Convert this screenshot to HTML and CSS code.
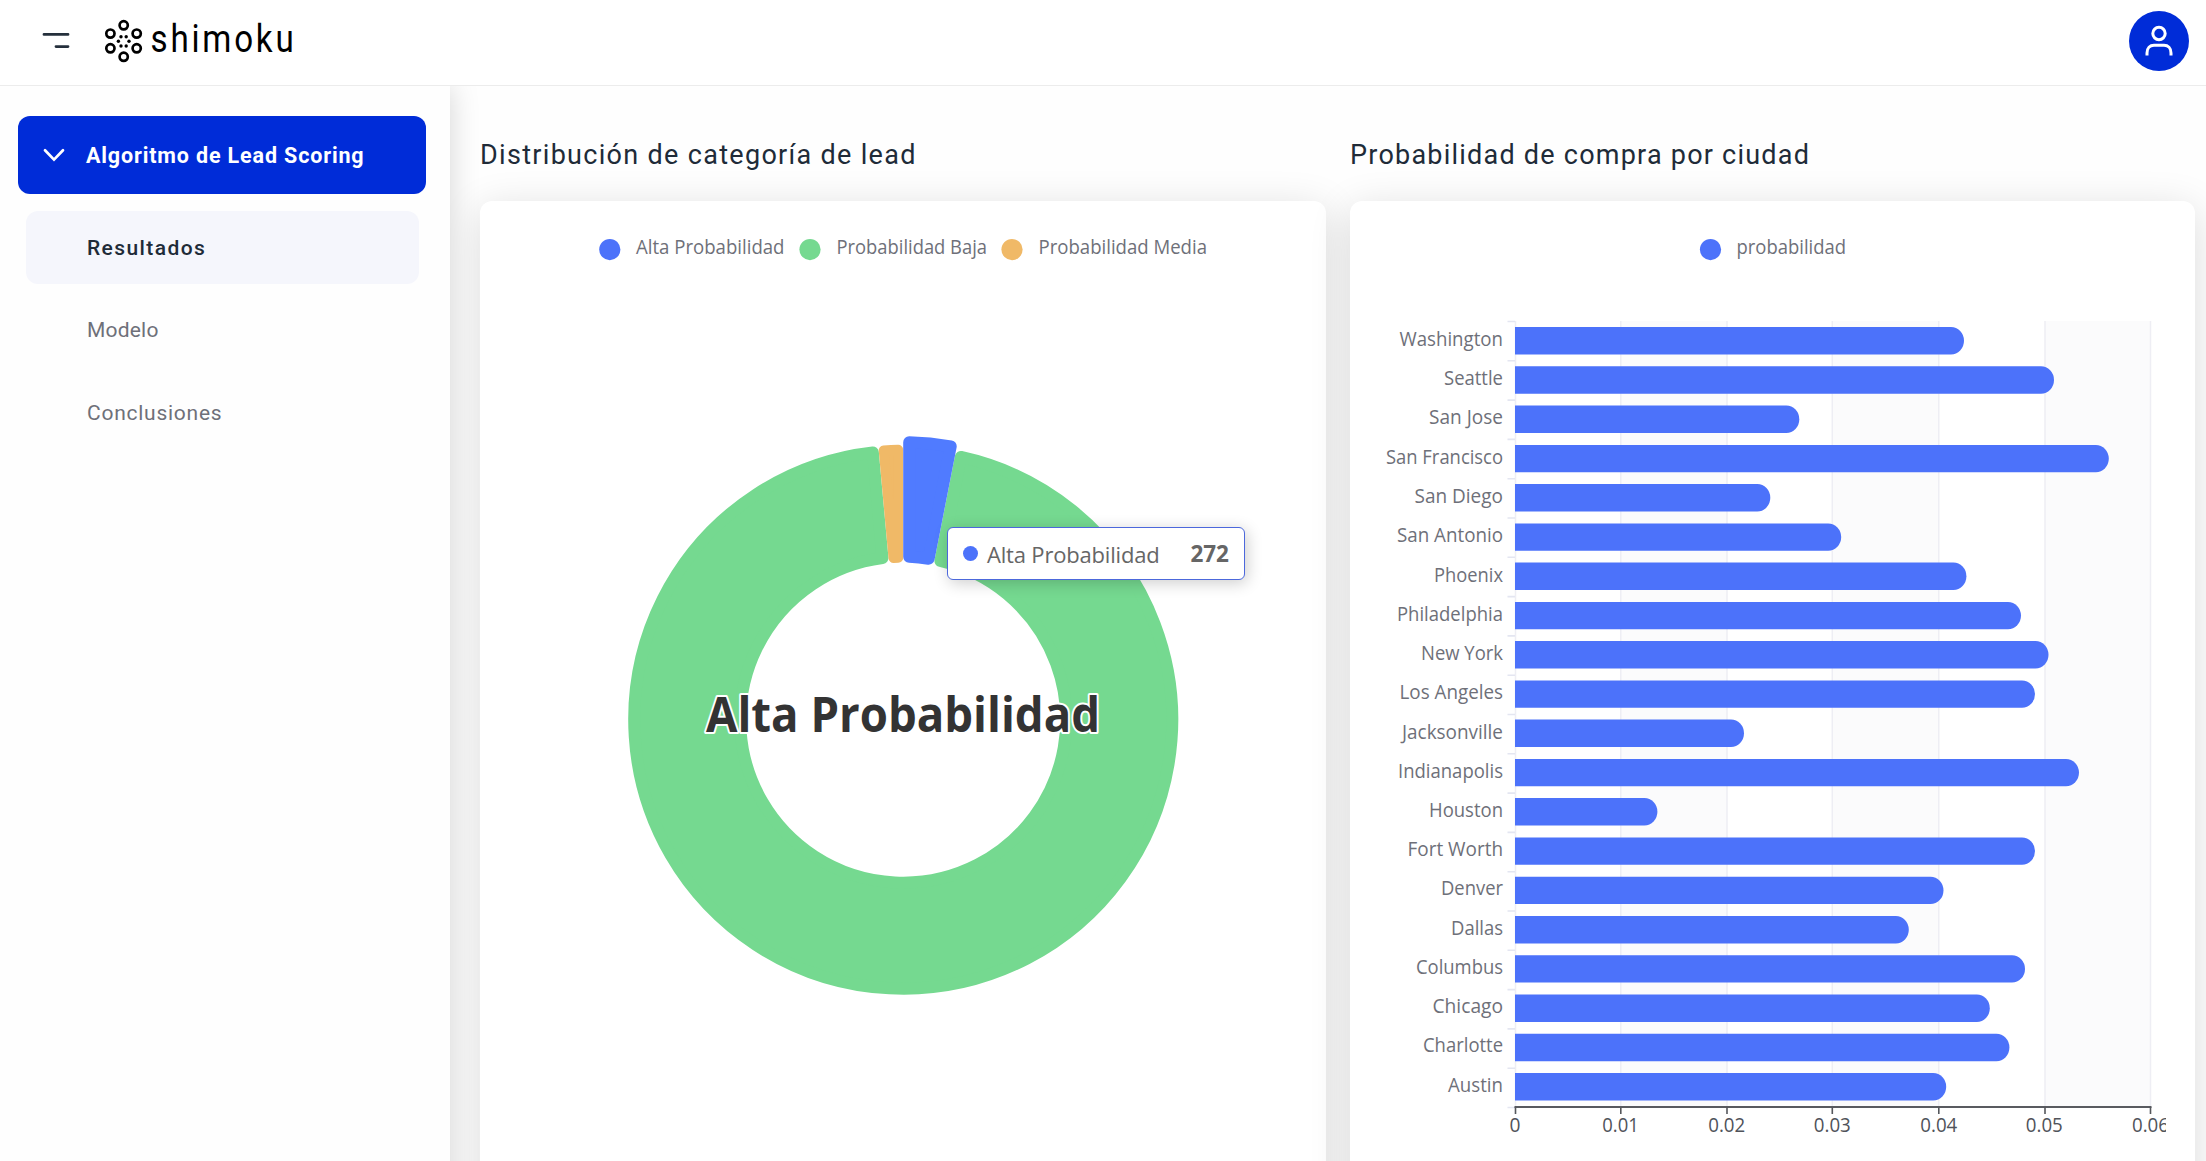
FILE: index.html
```html
<!DOCTYPE html>
<html lang="es">
<head>
<meta charset="utf-8">
<title>Shimoku - Algoritmo de Lead Scoring</title>
<link rel="stylesheet" href="styles.css">
</head>
<body>
<header class="topbar">
  <svg class="menu-icon" width="28" height="18" viewBox="0 0 28 18"><path d="M2 3.4H26M14 15.6H26"/></svg>
  <svg class="logo" width="200" height="60" viewBox="104 11 200 60">
    <g class="logo-rings">
      <circle cx="123.7" cy="25.3" r="4.1"/><circle cx="110.4" cy="33.6" r="4.1"/><circle cx="136.7" cy="33.6" r="4.1"/>
      <circle cx="110.4" cy="48.3" r="4.1"/><circle cx="136.7" cy="48.3" r="4.1"/><circle cx="123.7" cy="56.8" r="4.1"/>
    </g>
    <g class="logo-dots">
      <circle cx="121" cy="36.7" r="1.7"/><circle cx="126.2" cy="36.7" r="1.7"/><circle cx="118.4" cy="41.3" r="1.7"/>
      <circle cx="129" cy="41.3" r="1.7"/><circle cx="121" cy="46" r="1.7"/><circle cx="126.2" cy="46" r="1.7"/>
    </g>
    <text class="logo-text" transform="translate(150.5 52) scale(.84 1)" textLength="170.5">shimoku</text>
  </svg>
  <div class="avatar">
    <svg width="30" height="34" viewBox="0 0 30 34"><circle cx="15" cy="9.5" r="6.2"/><path d="M3 31.5V29C3 24 6 21.2 10 21.2H20C24 21.2 27 24 27 29V31.5"/></svg>
  </div>
</header>
<div class="body">
  <nav class="sidebar">
    <div class="group">
      <svg width="24" height="16" viewBox="0 0 24 16"><path d="M3 3.2L12 12.6L21 3.2"/></svg>
      <span>Algoritmo de Lead Scoring</span>
    </div>
    <a class="item active">Resultados</a>
    <a class="item item-short">Modelo</a>
    <a class="item">Conclusiones</a>
  </nav>
  <main class="content">
    <section class="panel">
      <h2 class="title-one">Distribución de categoría de lead</h2>
      <div class="card">
        <svg class="chart" width="846" height="960" viewBox="480 201 846 960">
          <g class="legend">
            <circle class="c-blue" cx="609.8" cy="249.6" r="10.6"/><text x="636" y="254.3" textLength="148.5" lengthAdjust="spacingAndGlyphs">Alta Probabilidad</text>
            <circle class="c-green" cx="810" cy="249.6" r="10.6"/><text x="836.5" y="254.3" textLength="150.5" lengthAdjust="spacingAndGlyphs">Probabilidad Baja</text>
            <circle class="c-orange" cx="1012" cy="249.6" r="10.6"/><text x="1038.5" y="254.3" textLength="168.5" lengthAdjust="spacingAndGlyphs">Probabilidad Media</text>
          </g>
          <g transform="translate(903.2 719.7)" class="donut">
            <path class="s-green" d="M57.66 -262.75A269 269 0 1 1 -30.34 -267.28L-20.73 -161.68A163 163 0 1 0 37.24 -158.69Z"/>
            <path class="s-orange" d="M-19.48 -269.29A270 270 0 0 1 -5 -269.95L-5 -161.92A162 162 0 0 0 -9.69 -161.71Z"/>
            <path class="s-blue" d="M6 -277.44A277.5 277.5 0 0 1 47.52 -273.41L25.47 -161A163 163 0 0 0 6 -162.89Z"/>
          </g>
          <text class="center-label" x="706" y="731.5" textLength="394" lengthAdjust="spacingAndGlyphs">Alta Probabilidad</text>
        </svg>
        <div class="tooltip"><i></i><span>Alta Probabilidad</span><b>272</b></div>
      </div>
    </section>
    <section class="panel">
      <h2 class="title-two">Probabilidad de compra por ciudad</h2>
      <div class="card">
        <svg class="chart" width="816" height="960" viewBox="1350 201 816 960">
          <g class="legend">
            <circle class="c-blue" cx="1710.5" cy="249.6" r="10.6"/><text x="1736.5" y="254.3" textLength="109.5" lengthAdjust="spacingAndGlyphs">probabilidad</text>
          </g>
          <g class="bands"><path d="M1621 321h106v786h-106zM1832.5 321h106v786h-106zM2044.5 321h106v786h-106z"/></g>
          <path class="grid" d="M1515.5 321V1107M1620.8 321V1107M1727 321V1107M1832.3 321V1107M1938.8 321V1107M2045 321V1107M2150.5 321V1107"/>
          <path class="yticks" d="M1507.5 321.5h7.5m-7.5 39.3h7.5m-7.5 39.3h7.5m-7.5 39.3h7.5m-7.5 39.3h7.5m-7.5 39.3h7.5m-7.5 39.3h7.5m-7.5 39.3h7.5m-7.5 39.3h7.5m-7.5 39.3h7.5m-7.5 39.3h7.5m-7.5 39.3h7.5m-7.5 39.3h7.5m-7.5 39.3h7.5m-7.5 39.3h7.5m-7.5 39.3h7.5m-7.5 39.3h7.5m-7.5 39.3h7.5m-7.5 39.3h7.5m-7.5 39.3h7.5m-7.5 39.3h7.5"/>
          <g class="bars">
            <path d="M1515 327H1951a13 13.7 0 0 1 0 27.4H1515z"/>
            <path d="M1515 366.3H2041a13 13.7 0 0 1 0 27.4H1515z"/>
            <path d="M1515 405.6H1786.3a13 13.7 0 0 1 0 27.4H1515z"/>
            <path d="M1515 444.9H2095.8a13 13.7 0 0 1 0 27.4H1515z"/>
            <path d="M1515 484.1H1757.3a13 13.7 0 0 1 0 27.4H1515z"/>
            <path d="M1515 523.4H1828.2a13 13.7 0 0 1 0 27.4H1515z"/>
            <path d="M1515 562.6H1953.4a13 13.7 0 0 1 0 27.4H1515z"/>
            <path d="M1515 601.9H2008a13 13.7 0 0 1 0 27.4H1515z"/>
            <path d="M1515 641.1H2035.5a13 13.7 0 0 1 0 27.4H1515z"/>
            <path d="M1515 680.4H2022a13 13.7 0 0 1 0 27.4H1515z"/>
            <path d="M1515 719.6H1731a13 13.7 0 0 1 0 27.4H1515z"/>
            <path d="M1515 758.9H2066a13 13.7 0 0 1 0 27.4H1515z"/>
            <path d="M1515 798.1H1644.4a13 13.7 0 0 1 0 27.4H1515z"/>
            <path d="M1515 837.4H2022a13 13.7 0 0 1 0 27.4H1515z"/>
            <path d="M1515 876.7H1930.5a13 13.7 0 0 1 0 27.4H1515z"/>
            <path d="M1515 916H1895.8a13 13.7 0 0 1 0 27.4H1515z"/>
            <path d="M1515 955.2H2012a13 13.7 0 0 1 0 27.4H1515z"/>
            <path d="M1515 994.5H1976.8a13 13.7 0 0 1 0 27.4H1515z"/>
            <path d="M1515 1033.8H1996.4a13 13.7 0 0 1 0 27.4H1515z"/>
            <path d="M1515 1073H1933.2a13 13.7 0 0 1 0 27.4H1515z"/>
          </g>
          <path class="axis" d="M1514.5 1107H2151.5"/>
          <path class="xticks" d="M1515.5 1107v7M1620.8 1107v7M1727 1107v7M1832.3 1107v7M1938.8 1107v7M2045 1107v7M2150.5 1107v7"/>
          <g class="cities">
            <text x="1503" y="345.6" textLength="103.5" lengthAdjust="spacingAndGlyphs">Washington</text>
            <text x="1503" y="384.9" textLength="59" lengthAdjust="spacingAndGlyphs">Seattle</text>
            <text x="1503" y="424.4" textLength="74" lengthAdjust="spacingAndGlyphs">San Jose</text>
            <text x="1503" y="463.6" textLength="117" lengthAdjust="spacingAndGlyphs">San Francisco</text>
            <text x="1503" y="502.6" textLength="88.5" lengthAdjust="spacingAndGlyphs">San Diego</text>
            <text x="1503" y="541.8" textLength="106" lengthAdjust="spacingAndGlyphs">San Antonio</text>
            <text x="1503" y="581.6" textLength="69" lengthAdjust="spacingAndGlyphs">Phoenix</text>
            <text x="1503" y="620.7" textLength="106" lengthAdjust="spacingAndGlyphs">Philadelphia</text>
            <text x="1503" y="659.8" textLength="82" lengthAdjust="spacingAndGlyphs">New York</text>
            <text x="1503" y="699" textLength="103.5" lengthAdjust="spacingAndGlyphs">Los Angeles</text>
            <text x="1503" y="738.6" textLength="101" lengthAdjust="spacingAndGlyphs">Jacksonville</text>
            <text x="1503" y="777.8" textLength="105" lengthAdjust="spacingAndGlyphs">Indianapolis</text>
            <text x="1503" y="816.8" textLength="74" lengthAdjust="spacingAndGlyphs">Houston</text>
            <text x="1503" y="855.9" textLength="95.5" lengthAdjust="spacingAndGlyphs">Fort Worth</text>
            <text x="1503" y="895.2" textLength="62" lengthAdjust="spacingAndGlyphs">Denver</text>
            <text x="1503" y="934.8" textLength="52" lengthAdjust="spacingAndGlyphs">Dallas</text>
            <text x="1503" y="974" textLength="87" lengthAdjust="spacingAndGlyphs">Columbus</text>
            <text x="1503" y="1013.1" textLength="70.5" lengthAdjust="spacingAndGlyphs">Chicago</text>
            <text x="1503" y="1052.3" textLength="80" lengthAdjust="spacingAndGlyphs">Charlotte</text>
            <text x="1503" y="1091.9" textLength="55" lengthAdjust="spacingAndGlyphs">Austin</text>
          </g>
          <g class="values">
            <text x="1515" y="1132">0</text>
            <text x="1620.5" y="1132" textLength="36.5" lengthAdjust="spacingAndGlyphs">0.01</text>
            <text x="1726.7" y="1132" textLength="37" lengthAdjust="spacingAndGlyphs">0.02</text>
            <text x="1832.3" y="1132" textLength="37" lengthAdjust="spacingAndGlyphs">0.03</text>
            <text x="1938.8" y="1132" textLength="37" lengthAdjust="spacingAndGlyphs">0.04</text>
            <text x="2044.3" y="1132" textLength="37" lengthAdjust="spacingAndGlyphs">0.05</text>
            <text x="2150.5" y="1132" textLength="37" lengthAdjust="spacingAndGlyphs">0.06</text>
          </g>
        </svg>
      </div>
    </section>
  </main>
</div>
</body>
</html>
```
FILE: styles.css
```css
* { box-sizing: border-box; }
body {
  margin: 0;
  height: 1161px;
  display: flex;
  flex-direction: column;
  overflow: hidden;
  background: #fefefe;
  font-family: Roboto, "Liberation Sans", sans-serif;
  color: #202b38;
}
.topbar {
  flex: none;
  height: 86px;
  display: flex;
  align-items: flex-start;
  padding: 11px 17px 0 42px;
  background: #fff;
  border-bottom: 1px solid #ececec;
  position: relative;
  z-index: 2;
}
.menu-icon { margin-top: 20px; fill: none; stroke: #25303c; stroke-width: 2.8; stroke-linecap: round; }
.logo { margin: 0 0 0 34px; }
.logo-rings { fill: none; stroke: #000; stroke-width: 2.7; }
.logo-text { font-size: 39.5px; font-weight: 400; fill: #000; }
.avatar {
  margin-left: auto;
  width: 60px;
  height: 60px;
  border-radius: 50%;
  background: #002cd8;
  display: flex;
  align-items: center;
  justify-content: center;
}
.avatar svg { fill: none; stroke: #fff; stroke-width: 3; }
.body { flex: 1; min-height: 0; display: flex; }
.sidebar {
  flex: none;
  width: 450px;
  margin-bottom: -80px;
  padding: 30px 24px 0 18px;
  background: #fefefe;
  box-shadow: 0 0 28px rgba(0, 0, 0, .17);
  position: relative;
  z-index: 1;
}
.group {
  height: 78px;
  border-radius: 12px;
  background: #002cd8;
  color: #fff;
  display: flex;
  align-items: center;
  padding-left: 24px;
  font-size: 21.5px;
  font-weight: 700;
  letter-spacing: .85px;
  margin-bottom: 17px;
}
.group svg { fill: none; stroke: #fff; stroke-width: 2.7; stroke-linecap: round; margin-right: 20px; }
.item {
  display: flex;
  align-items: center;
  height: 73px;
  margin: 0 7px 9.5px 8px;
  padding-left: 61px;
  border-radius: 12px;
  font-size: 21px;
  color: #6e7079;
  letter-spacing: .75px;
}
.item-short { letter-spacing: .2px; }
.active { background: #f5f6fc; color: #202b38; font-weight: 500; letter-spacing: 1.4px; }
.content {
  flex: 1;
  display: grid;
  grid-template-columns: 846px 845px;
  column-gap: 24px;
  padding-left: 30px;
  margin-bottom: -80px;
}
.panel { display: flex; flex-direction: column; }
h2 { margin: 0; height: 115px; padding-top: 53px; font-size: 27px; line-height: 32px; font-weight: 400; }
.title-one { letter-spacing: 1.31px; }
.title-two { letter-spacing: 1.23px; }
.card {
  flex: 1;
  position: relative;
  border-radius: 12px 12px 0 0;
  background: #fff;
  box-shadow: 0 8px 42px rgba(0, 0, 0, .14);
}
.chart { display: block; overflow: hidden; font-family: "Open Sans", "Noto Sans", sans-serif; }
.legend text, .cities text { font-size: 19.2px; fill: #6e7079; }
.cities { text-anchor: end; }
.values text { font-size: 19.2px; fill: #50535a; text-anchor: middle; }
.c-blue { fill: #4c72fa; }
.c-green { fill: #75d990; }
.c-orange { fill: #f0b967; }
.donut path { stroke-width: 12; stroke-linejoin: round; }
.donut .s-green { fill: #75d990; stroke: #75d990; }
.donut .s-orange { fill: #f0b967; stroke: #f0b967; stroke-width: 10; }
.donut .s-blue { fill: #507bff; stroke: #507bff; }
.center-label { font-size: 47.5px; font-weight: 700; fill: #333; stroke: #fff; stroke-width: 4; paint-order: stroke; stroke-linejoin: round; }
.tooltip {
  position: absolute;
  left: 467px;
  top: 326px;
  width: 298px;
  height: 53px;
  border: 1.5px solid #4c68dc;
  border-radius: 6px;
  background: #fff;
  box-shadow: 2px 3px 16px rgba(0, 0, 0, .2);
  display: flex;
  align-items: center;
  padding: 0 15px;
  font: 22px "Open Sans", "Noto Sans", sans-serif;
  color: #666;
}
.tooltip span { letter-spacing: -.18px; }
.tooltip i { width: 15px; height: 15px; border-radius: 50%; background: #4c72fa; margin-right: 9px; }
.tooltip b { margin-left: auto; font-weight: 700; font-size: 22.5px; }
.bands path { fill: #fbfbfc; }
.grid { stroke: #eeeef4; stroke-width: 1.5; }
.yticks { fill: none; stroke: #e4e6f1; stroke-width: 1.6; }
.bars path { fill: #4c72fa; }
.axis { stroke: #595b60; stroke-width: 2; }
.xticks { stroke: #55575c; stroke-width: 1.6; }
```
